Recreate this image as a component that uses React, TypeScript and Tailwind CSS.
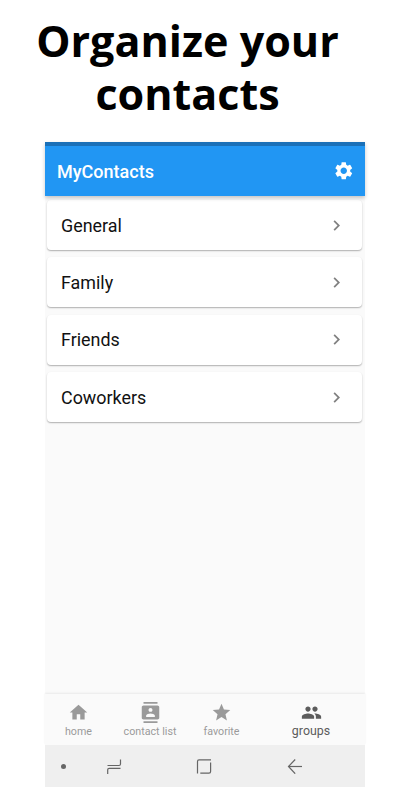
import React from "react";
import {
  MdChevronRight,
  MdContacts,
  MdHome,
  MdPeople,
  MdSettings,
  MdStar,
} from "react-icons/md";

const groups = ["General", "Family", "Friends", "Coworkers"];

const tabs = [
  { label: "home", icon: MdHome, width: "w-[67px]" },
  { label: "contact list", icon: MdContacts, width: "w-[76px]" },
  { label: "favorite", icon: MdStar, width: "w-[67px]" },
  { label: "groups", icon: MdPeople, width: "w-[112px]", active: true },
];

function AppHeader() {
  return (
    <header className="relative z-10 shrink-0 bg-[#2196f3] shadow-[0_2px_4px_rgba(0,0,0,0.22)]">
      <div className="h-1 bg-[#1a70b8]" />
      <div className="flex h-[50px] items-center justify-between pl-3 pr-[10.5px]">
        <h2 className="pt-px text-[18px] font-medium text-white">MyContacts</h2>
        <MdSettings className="size-[21.5px] text-white" />
      </div>
    </header>
  );
}

function GroupList() {
  return (
    <ul className="flex flex-1 flex-col gap-[7.4px] pl-[2px] pr-[3px] pt-1">
      {groups.map((group) => (
        <li
          key={group}
          className="flex h-[50px] shrink-0 items-center justify-between rounded-[4px] bg-white pl-[14px] pr-[15px] shadow-[0_1px_1.5px_rgba(0,0,0,0.3)]"
        >
          <span className="pt-[2px] text-[17.9px] text-[#111]">{group}</span>
          <MdChevronRight className="size-[21px] text-[#808080]" />
        </li>
      ))}
    </ul>
  );
}

function BottomTabs() {
  return (
    <nav className="flex h-[51px] shrink-0 bg-[#fafafa] shadow-[0_-1px_2px_rgba(0,0,0,0.07)]">
      {tabs.map(({ label, icon: Icon, width, active }) => (
        <div
          key={label}
          className={`flex shrink-0 flex-col items-center pt-2 ${width} ${active ? "text-[#5c5c5c]" : "text-[#9a9a9a]"}`}
        >
          <Icon className="size-[21px]" />
          <span
            className={
              active
                ? "text-[12.4px] leading-[15px]"
                : "text-[10.7px] leading-[18px] whitespace-nowrap"
            }
          >
            {label}
          </span>
        </div>
      ))}
    </nav>
  );
}

function SystemBar() {
  return (
    <div className="flex h-[42px] shrink-0 items-center bg-[#efefef] pl-4 text-[#666]">
      <span className="size-[5px] rounded-full bg-current" />
      <svg className="ml-[40px] size-4" viewBox="0 0 16 16" fill="none" stroke="currentColor" strokeWidth="1.2">
        <path d="M1.5 7.5H13Q14.5 7.5 14.5 6V1.5" />
        <path d="M14.5 10.3H3.2Q1.7 10.3 1.7 11.8V16" />
      </svg>
      <svg className="ml-[74px] size-4" viewBox="0 0 16 16" fill="none" stroke="currentColor" strokeWidth="1.2">
        <path d="M1.5 15.6V3.5Q1.5 1.9 3 1.9H15" />
        <path d="M14.6 4.5V13.5Q14.6 15.2 13 15.2H4.3" />
      </svg>
      <svg className="ml-[74.5px] size-4" viewBox="0 0 16 16" fill="none" stroke="currentColor" strokeWidth="1.2">
        <path d="M1.5 8.5H15" />
        <path d="M8.2 1.5L1.5 8.5L8.2 15.7" />
      </svg>
    </div>
  );
}

export default function App() {
  return (
    <div className="h-[800px] w-[400px] overflow-hidden bg-white">
      <h1 className="h-[142px] pr-[25px] pt-[14px] text-center font-['Open_Sans',sans-serif] text-[43.1px] font-bold leading-[53px] text-black">
        Organize your
        <br />
        contacts
      </h1>
      <main className="ml-[45px] flex h-[645px] w-[320px] flex-col bg-[#fafafa] font-[Roboto,sans-serif]">
        <AppHeader />
        <GroupList />
        <BottomTabs />
        <SystemBar />
      </main>
    </div>
  );
}
